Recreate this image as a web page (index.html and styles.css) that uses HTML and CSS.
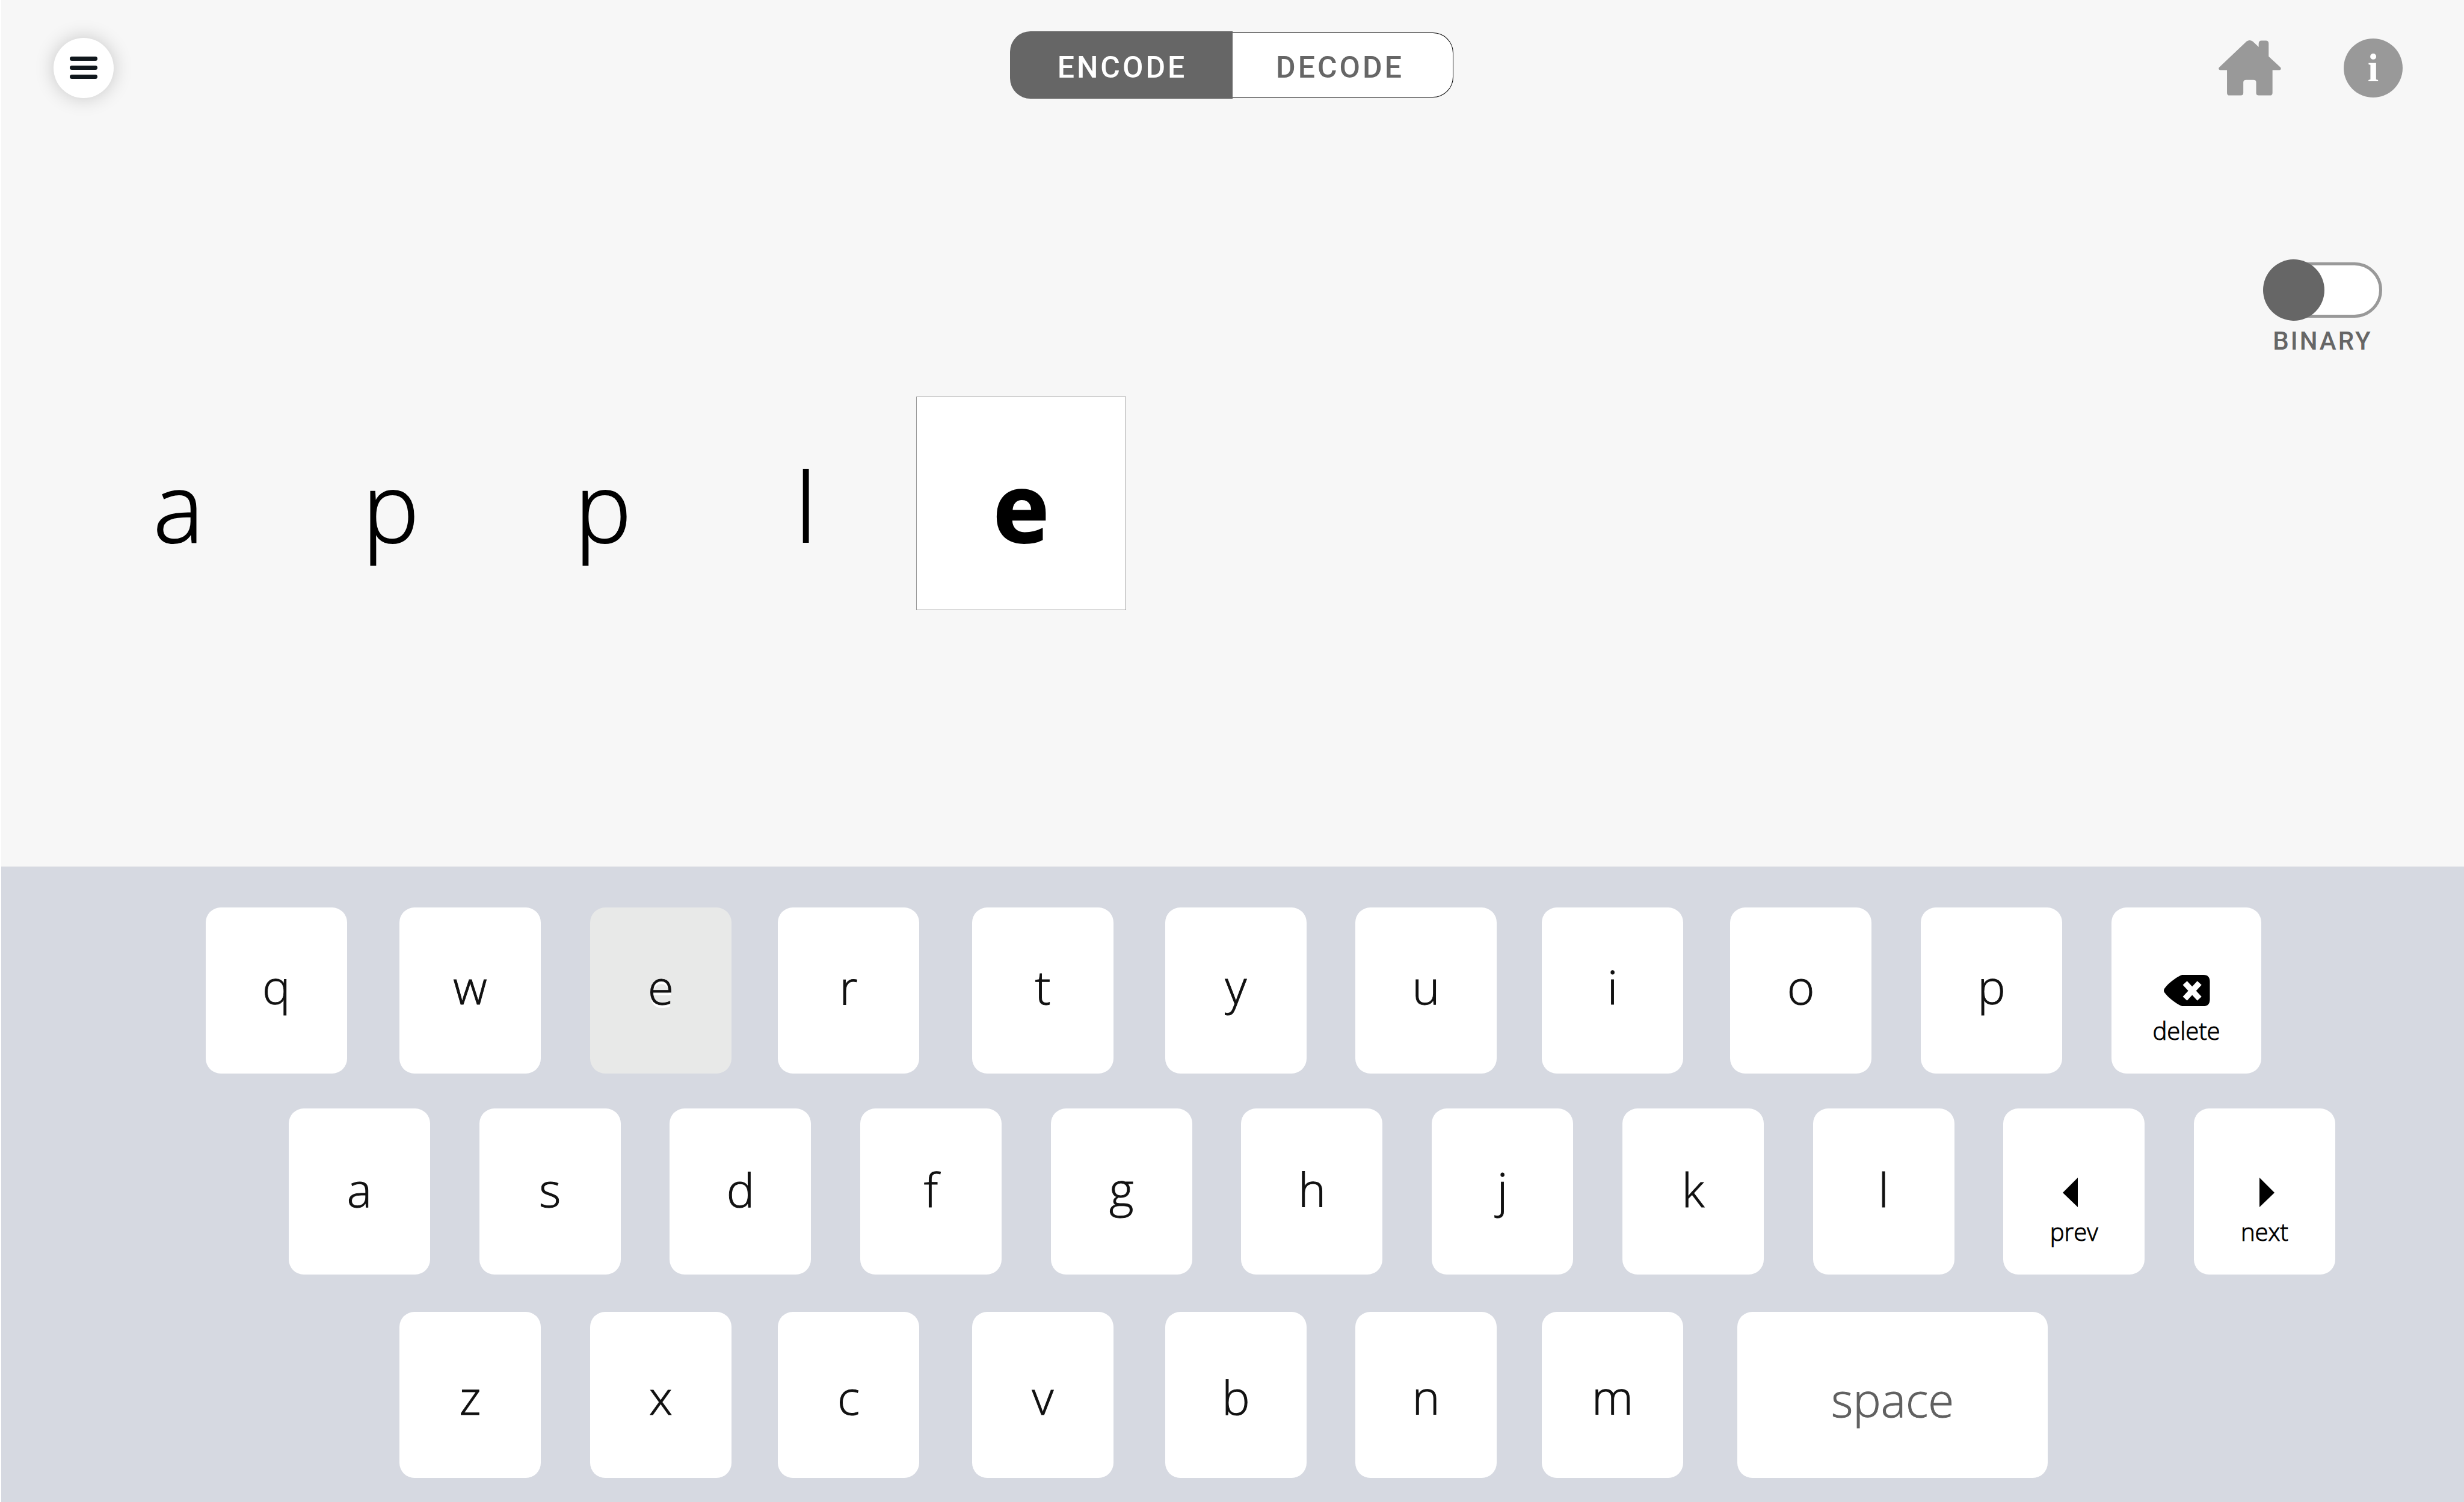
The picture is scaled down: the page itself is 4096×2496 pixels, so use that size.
FILE: index.html
```html
<!DOCTYPE html>
<html lang="en">
<head>
<meta charset="utf-8">
<meta name="viewport" content="width=device-width, initial-scale=1">
<title>Encode</title>
<link rel="stylesheet" href="styles.css">
</head>
<body>
<div class="app">
  <main class="stage">
    <header class="topbar">
      <div class="side">
        <button class="menu" type="button" aria-label="Menu">
          <svg class="menu-icon" viewBox="0 0 46 38" aria-hidden="true">
            <rect x="0" y="0" width="46" height="7" rx="3.5"/>
            <rect x="0" y="15" width="46" height="7" rx="3.5"/>
            <rect x="0" y="30" width="46" height="7" rx="3.5"/>
          </svg>
        </button>
      </div>
      <div class="modes">
        <button class="mode mode-active" type="button" aria-pressed="true">ENCODE</button>
        <button class="mode" type="button" aria-pressed="false">DECODE</button>
      </div>
      <nav class="side side-end">
        <a class="home" href="#home" aria-label="Home">
          <svg class="home-icon" viewBox="0 0 326 288" aria-hidden="true">
            <path d="M146 5Q162-5 178 5L209 34V18Q209 1 224 1H247Q261 1 261 16V84L322 140Q330 152 317 155H281V274Q281 287 268 287H209Q196 287 196 275V219Q196 206 182 206H144Q129 206 129 220V275Q129 287 116 287H57Q44 287 44 273V155H8Q-4 152 3 141Z"/>
          </svg>
        </a>
        <button class="info" type="button" aria-label="Information">i</button>
      </nav>
    </header>

    <div class="options">
      <label class="toggle">
        <input class="switch" type="checkbox" role="switch">
        <span class="toggle-label">BINARY</span>
      </label>
    </div>

    <div class="word">
      <span class="letter">a</span>
      <span class="letter">p</span>
      <span class="letter">p</span>
      <span class="letter letter-narrow">l</span>
      <span class="letter letter-current">e</span>
    </div>
  </main>

  <section class="keyboard" aria-label="Keyboard">
    <div class="row row-top">
      <button class="key" type="button">q</button>
      <button class="key" type="button">w</button>
      <button class="key key-pressed" type="button">e</button>
      <button class="key" type="button">r</button>
      <button class="key" type="button">t</button>
      <button class="key" type="button">y</button>
      <button class="key" type="button">u</button>
      <button class="key" type="button">i</button>
      <button class="key" type="button">o</button>
      <button class="key" type="button">p</button>
      <button class="key key-action key-delete" type="button">
        <svg class="delete-icon" viewBox="0 0 80 54" aria-hidden="true">
          <path fill="#000" d="M32 0H69Q80 0 80 12V42Q80 54 69 54H32Q26 52 18 46Q8 39 2 31Q-1 27 2 23Q8 15 18 8Q26 2 32 0Z"/>
          <path stroke="#fff" stroke-width="10" d="M37 14L62 41M62 14L37 41"/>
        </svg>
        <span>delete</span>
      </button>
    </div>
    <div class="row row-middle">
      <button class="key" type="button">a</button>
      <button class="key" type="button">s</button>
      <button class="key" type="button">d</button>
      <button class="key" type="button">f</button>
      <button class="key" type="button">g</button>
      <button class="key" type="button">h</button>
      <button class="key" type="button">j</button>
      <button class="key" type="button">k</button>
      <button class="key" type="button">l</button>
      <button class="key key-action" type="button">
        <svg class="arrow-icon" viewBox="0 0 37 49" aria-hidden="true"><path d="M25 0V49L0 25Z"/></svg>
        <span>prev</span>
      </button>
      <button class="key key-action" type="button">
        <svg class="arrow-icon" viewBox="0 0 37 49" aria-hidden="true"><path d="M10 0V49L35 25Z"/></svg>
        <span>next</span>
      </button>
    </div>
    <div class="row row-bottom">
      <button class="key" type="button">z</button>
      <button class="key" type="button">x</button>
      <button class="key" type="button">c</button>
      <button class="key" type="button">v</button>
      <button class="key" type="button">b</button>
      <button class="key" type="button">n</button>
      <button class="key" type="button">m</button>
      <button class="key key-space" type="button">space</button>
    </div>
  </section>
</div>
</body>
</html>
```

FILE: styles.css
```css
* {
  box-sizing: border-box;
}

body {
  margin: 0;
  background: #f7f7f7;
  font-family: "Open Sans", sans-serif;
  font-weight: 300;
  color: #000;
}

button {
  margin: 0;
  padding: 0;
  border: 0;
  background: none;
  color: inherit;
  font: inherit;
  cursor: pointer;
}

.app {
  display: flex;
  flex-direction: column;
  min-height: 100vh;
  border-left: 2px solid #fff;
}

.stage {
  flex: 1;
  padding-top: 52px;
}

/* Top bar */

.topbar {
  display: grid;
  grid-template-columns: 1fr auto 1fr;
  align-items: center;
  padding: 0 91px 0 87px;
}

.side {
  display: flex;
  align-items: center;
  padding-top: 10px;
}

.side-end {
  justify-content: flex-end;
  gap: 104px;
  padding-right: 11px;
}

.menu {
  display: flex;
  align-items: center;
  justify-content: center;
  width: 100px;
  height: 100px;
  border-radius: 50%;
  background: #fff;
  box-shadow: 0 0 32px rgba(0, 0, 0, 0.2);
}

.menu-icon {
  width: 46px;
  height: 38px;
  fill: #10171c;
}

.modes {
  display: flex;
  align-items: center;
}

.mode {
  width: 367px;
  height: 108px;
  padding: 7px 8px 0 0;
  border: 1px solid #000;
  border-left: 0;
  border-radius: 0 34px 34px 0;
  background: #fff;
  color: #666;
  font: 500 50px/60px Roboto, sans-serif;
  letter-spacing: 4px;
}

.mode-active {
  width: 370px;
  height: 112px;
  padding: 7px 0 0 4px;
  border: 0;
  border-radius: 34px 0 0 34px;
  background: #666;
  color: #fff;
}

.home,
.home-icon {
  display: block;
  width: 104px;
  height: 92px;
}

.home-icon {
  fill: #999;
}

.info {
  width: 98px;
  height: 98px;
  border-radius: 50%;
  background: #999;
  color: #fff;
  font: 700 66px/98px "Liberation Serif", serif;
}

/* Binary switch */

.options {
  display: flex;
  justify-content: flex-end;
  padding: 267px 136px 0 0;
}

.toggle {
  display: flex;
  flex-direction: column;
  align-items: center;
  gap: 14px;
}

.switch {
  appearance: none;
  display: flex;
  align-items: center;
  position: relative;
  width: 198px;
  height: 102px;
  margin: 0;
}

.switch::before {
  content: "";
  box-sizing: border-box;
  flex: 1;
  height: 92px;
  margin-left: 12px;
  border: 5px solid #999;
  border-radius: 46px;
  background: #fff;
}

.switch::after {
  content: "";
  position: absolute;
  top: 0;
  left: 0;
  width: 102px;
  height: 102px;
  border-radius: 50%;
  background: #666;
}

.switch:checked::after {
  left: auto;
  right: 0;
}

.toggle-label {
  color: #666;
  font: 500 42px/40px Roboto, sans-serif;
  letter-spacing: 3px;
}

/* Word being encoded */

.word {
  display: flex;
  padding: 72px 118px 0;
}

.letter {
  display: flex;
  align-items: center;
  justify-content: center;
  width: 353px;
  height: 355px;
  padding-top: 6px;
  font-size: 158px;
  line-height: 216px;
  -webkit-text-stroke: 2px currentColor;
}

.letter-narrow {
  width: 321px;
}

.letter-current {
  width: 349px;
  margin-left: 23px;
  border: 1px solid #999;
  background: #fff;
  font-weight: 700;
}

/* Keyboard */

.keyboard {
  display: flex;
  flex-direction: column;
  padding: 68px 0 40px;
  background: #d6d9e1;
}

.row {
  display: grid;
}

.row-top {
  grid-template-columns: 322fr 317fr 312fr 323fr 321fr 316fr 310fr 313fr 317fr 317fr 249fr;
  padding: 0 337px 0 340px;
}

.row-middle {
  grid-template-columns: repeat(11, 235px);
  justify-content: space-between;
  padding: 58px 214px 62px 478px;
}

.row-bottom {
  grid-template-columns: 317fr 312fr 323fr 321fr 316fr 310fr 325fr 516fr;
  padding: 0 692px 0 662px;
}

.key {
  width: 235px;
  height: 276px;
  padding-bottom: 14px;
  border-radius: 25px;
  background: #fff;
  color: #111;
  font-size: 78px;
  line-height: 106px;
  -webkit-text-stroke: 1px currentColor;
}

.key-pressed {
  background: #e8e9e8;
  text-shadow: 0 5px 0 #fff;
}

.row-middle .key {
  padding-bottom: 8px;
}

.row-bottom .key {
  padding: 6px 0 0;
}

.row-bottom .key-space {
  width: 100%;
  padding-top: 14px;
  color: #606060;
}

.row .key-action {
  display: flex;
  flex-direction: column;
  align-items: center;
  justify-content: flex-end;
  gap: 14px;
  padding-bottom: 44px;
  color: #000;
  font-size: 40px;
  line-height: 54px;
}

.key-delete {
  width: 100%;
}

.delete-icon {
  width: 78px;
  height: 52px;
}

.arrow-icon {
  width: 37px;
  height: 49px;
}
```
